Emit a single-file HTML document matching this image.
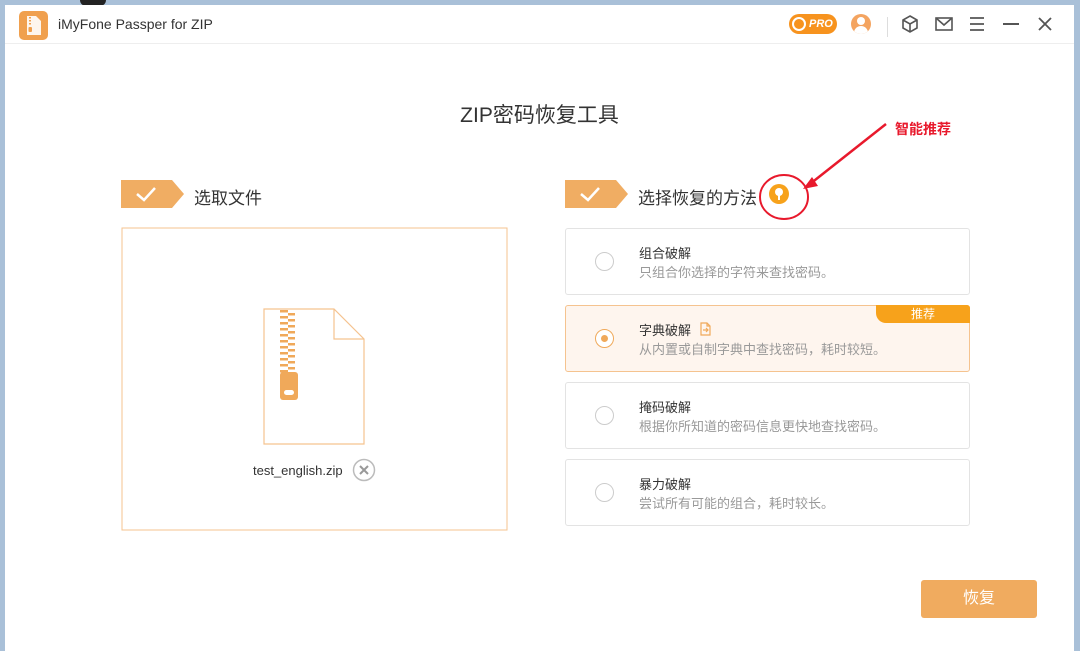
<!DOCTYPE html>
<html><head><meta charset="utf-8"><style>
*{margin:0;padding:0;box-sizing:border-box}
body{width:1080px;height:651px;background:#a9c0d8;position:relative;overflow:hidden;font-family:"Liberation Sans","Noto Sans CJK SC",sans-serif}
.win{position:absolute;left:5px;top:5px;width:1069px;height:646px;background:#fff}
.a{position:absolute}
.hdr{position:absolute;left:0;top:0;width:1069px;height:39px;border-bottom:1px solid #eee}
.card{position:absolute;left:565px;width:405px;height:67px;border:1px solid #e3e3e3;border-radius:3px;background:#fff}
.card .r{position:absolute;left:29px;top:23px;width:19px;height:19px;border:1.5px solid #ccc;border-radius:50%}
.card .t{position:absolute;left:73px;top:14px;font-size:13px;color:#333}
.card .d{position:absolute;left:73px;top:33px;font-size:13px;color:#999}
</style></head><body>
<div class="a" style="left:80px;top:0;width:26px;height:6px;background:#222;border-radius:0 0 13px 13px"></div>
<div class="win">
 <div class="hdr">
  <div class="a" style="left:14px;top:6px;width:29px;height:29px;background:#f0a04e;border-radius:5px">
   <svg width="29" height="29"><path d="M8 5h9l5 5v14H8z" fill="#fff" opacity=".9"/><path d="M11 6v9" stroke="#f0a04e" stroke-width="2" stroke-dasharray="1.5 1.5"/><rect x="9.5" y="16" width="3.5" height="5" rx="1" fill="#f0a04e"/></svg>
  </div>
  <div class="a" style="left:53px;top:11px;font-size:14px;color:#333">iMyFone Passper for ZIP</div>
  <div class="a" style="left:784px;top:9px;width:48px;height:20px;background:#f7931e;border-radius:10px;color:#fff;font-size:11px;font-weight:bold;font-style:italic;padding-left:20px;line-height:20px">PRO<div class="a" style="left:3px;top:3px;width:14px;height:14px;border:2px solid #fff;border-radius:50%"></div></div>
  <div class="a" style="left:846px;top:9px;width:20px;height:20px;background:#f4a460;border-radius:50%;overflow:hidden"><div class="a" style="left:6px;top:3px;width:8px;height:8px;background:#fff;border-radius:50%"></div><div class="a" style="left:3px;top:12px;width:14px;height:10px;background:#fff;border-radius:7px 7px 0 0"></div></div>
  <div class="a" style="left:882px;top:12px;width:1px;height:20px;background:#ddd"></div>
  <svg class="a" style="left:895px;top:9px" width="20" height="20" fill="none" stroke="#555" stroke-width="1.6"><path d="M10 2l7 4v8l-7 4-7-4V6z M3 6l7 4 7-4 M10 10v8"/></svg>
  <svg class="a" style="left:929px;top:10px" width="20" height="18" fill="none" stroke="#555" stroke-width="1.6"><rect x="2" y="3" width="16" height="12"/><path d="M2 3l8 7 8-7"/></svg>
  <svg class="a" style="left:963px;top:10px" width="18" height="18" stroke="#555" stroke-width="1.8"><path d="M2 3h14M2 9h14M2 15h14"/></svg>
  <div class="a" style="left:998px;top:18px;width:16px;height:2px;background:#555"></div>
  <svg class="a" style="left:1032px;top:11px" width="16" height="16" stroke="#555" stroke-width="1.8"><path d="M2 2l12 12M14 2L2 14"/></svg>
 </div>
 <div class="a" style="left:0;top:94px;width:1069px;text-align:center;font-size:21px;color:#333">ZIP密码恢复工具</div>
 <div class="a" style="left:890px;top:114px;font-size:14px;font-weight:bold;color:#e8192c">智能推荐</div>
</div>
<svg class="a" style="left:0;top:0" width="1080" height="651" fill="none">
 <path d="M886 124L810 184" stroke="#e8192c" stroke-width="2.5"/><path d="M803 189l15-3-6-9z" fill="#e8192c"/>
 <ellipse cx="784" cy="197" rx="24" ry="22" stroke="#e8192c" stroke-width="2"/>
 <path d="M121 180h51l12 14-12 14h-51z" fill="#f0ad63"/><path d="M137 194l7 6 11-12" stroke="#fff" stroke-width="2.5"/>
 <path d="M565 180h51l12 14-12 14h-51z" fill="#f0ad63"/><path d="M581 194l7 6 11-12" stroke="#fff" stroke-width="2.5"/>
 <circle cx="779" cy="194" r="10" fill="#f7a21b"/><circle cx="779" cy="192" r="4" fill="#fff"/><path d="M779 195v5" stroke="#fff" stroke-width="2"/>
 <rect x="122" y="228" width="385" height="302" stroke="#f5c38f"/>
 <path d="M264 309h70l30 30v105h-100z M334 309v30h30" stroke="#f5c38f" stroke-width="1.2"/>
 <path d="M284 310v68" stroke="#f0a95a" stroke-width="8" stroke-dasharray="2.5 3.5"/>
 <path d="M291.5 313v65" stroke="#f0a95a" stroke-width="7" stroke-dasharray="2.5 3.5"/>
 <rect x="280" y="372" width="18" height="28" rx="3" fill="#f0a95a"/><rect x="284" y="390" width="10" height="5" rx="2.5" fill="#fff"/>
 <circle cx="364" cy="470" r="10.5" stroke="#bbb" stroke-width="1.5"/><path d="M360 466l8 8M368 466l-8 8" stroke="#999" stroke-width="2"/>
</svg>
<div class="a" style="left:194px;top:184px;font-size:17px;color:#333">选取文件</div>
<div class="a" style="left:638px;top:184px;font-size:17px;color:#333">选择恢复的方法</div>
<div class="a" style="left:253px;top:463px;font-size:13px;color:#333">test_english.zip</div>
<div class="card" style="top:228px"><div class="r"></div><div class="t">组合破解</div><div class="d">只组合你选择的字符来查找密码。</div></div>
<div class="card" style="top:305px;background:#fef5ee;border-color:#f5c38f"><div class="r" style="border-color:#f0a95a;background:#fff"><div class="a" style="left:4.5px;top:4.5px;width:7px;height:7px;border-radius:50%;background:#f0a95a"></div></div><div class="t">字典破解 <svg width="14" height="14" style="vertical-align:-1px;margin-left:4px" fill="none" stroke="#f0a95a" stroke-width="1.2"><path d="M2 1h6l3 3v9H2z M8 1v3h3 M4 8h5 M7 6l2 2-2 2"/></svg></div><div class="d">从内置或自制字典中查找密码，耗时较短。</div>
<div class="a" style="right:-1px;top:-1px;width:94px;height:18px;background:#f7a21b;border-radius:0 3px 0 10px;color:#fff;font-size:12px;text-align:center;line-height:18px">推荐</div></div>
<div class="card" style="top:382px"><div class="r"></div><div class="t">掩码破解</div><div class="d">根据你所知道的密码信息更快地查找密码。</div></div>
<div class="card" style="top:459px"><div class="r"></div><div class="t">暴力破解</div><div class="d">尝试所有可能的组合，耗时较长。</div></div>
<div class="a" style="left:921px;top:580px;width:116px;height:38px;background:#f0ab5f;border-radius:3px;color:#fff;font-size:16px;text-align:center;line-height:38px">恢复</div>
</body></html>
